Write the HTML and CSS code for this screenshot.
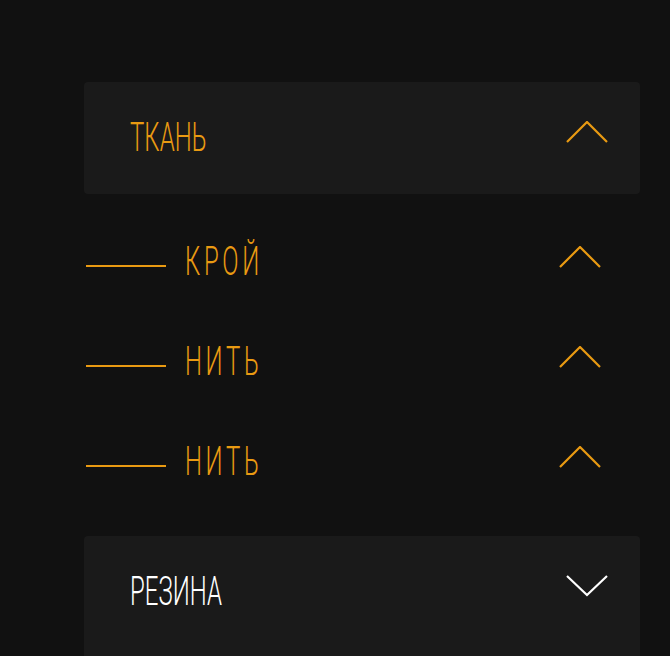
FILE: index.html
```html
<!DOCTYPE html>
<html lang="ru">
<head>
<meta charset="utf-8">
<link rel="stylesheet" href="styles.css">
</head>
<body>
<div class="wrap">
  <div class="card">
    <span class="title orange"><span class="scale">ТКАНЬ</span></span>
    <svg class="chev" width="42" height="22" viewBox="0 0 42 22"><polyline points="1,21 21,1 41,21" fill="none" stroke="#e99a12" stroke-width="2.2"/></svg>
  </div>
  <div class="list">
    <div class="row">
      <span class="dash"></span>
      <span class="sub"><span class="scale">КРОЙ</span></span>
      <svg class="chev sm" width="42" height="22" viewBox="0 0 42 22"><polyline points="1,21 21,1 41,21" fill="none" stroke="#e99a12" stroke-width="2.2"/></svg>
    </div>
    <div class="row">
      <span class="dash"></span>
      <span class="sub"><span class="scale">НИТЬ</span></span>
      <svg class="chev sm" width="42" height="22" viewBox="0 0 42 22"><polyline points="1,21 21,1 41,21" fill="none" stroke="#e99a12" stroke-width="2.2"/></svg>
    </div>
    <div class="row">
      <span class="dash"></span>
      <span class="sub"><span class="scale">НИТЬ</span></span>
      <svg class="chev sm" width="42" height="22" viewBox="0 0 42 22"><polyline points="1,21 21,1 41,21" fill="none" stroke="#e99a12" stroke-width="2.2"/></svg>
    </div>
  </div>
  <div class="card card2">
    <span class="title white"><span class="scale">РЕЗИНА</span></span>
    <svg class="chev down" width="42" height="22" viewBox="0 0 42 22"><polyline points="1,1 21,20 41,1" fill="none" stroke="#ffffff" stroke-width="2.2"/></svg>
  </div>
</div>
</body>
</html>
```

FILE: styles.css
```css
html, body {
  margin: 0;
  padding: 0;
  background: #111111;
  height: 100%;
  overflow: hidden;
}
body {
  font-family: Roboto, "Liberation Sans", sans-serif;
}
.wrap {
  width: 556px;
  margin-left: 84px;
  padding-top: 82px;
}
.card {
  height: 112px;
  background: #1a1a1a;
  border-radius: 4px;
  display: flex;
  align-items: center;
  padding: 0 32px 0 46px;
  box-sizing: border-box;
}
.card2 {
  margin-top: 24px;
  height: 140px;
  align-items: flex-start;
  padding-top: 36px;
  border-radius: 4px 4px 0 0;
}
.title {
  flex: 1;
  font-size: 40px;
  line-height: 40px;
  font-weight: 300;
  white-space: nowrap;
}
.scale {
  display: inline-block;
  transform: scaleX(0.6);
  transform-origin: left center;
}
.orange { color: #e99a12; }
.white { color: #ffffff; }
.chev {
  display: block;
  margin-top: -12px;
  flex: none;
}
.down {
  margin-top: 3px;
}
.list {
  padding-top: 18px;
}
.row {
  height: 100px;
  display: flex;
  align-items: center;
  padding-right: 39px;
}
.dash {
  width: 80px;
  height: 2px;
  margin-left: 2px;
  margin-top: 8px;
  background: #e99a12;
  flex: none;
}
.sub {
  flex: 1;
  margin-left: 19px;
  color: #e99a12;
  font-size: 40px;
  line-height: 40px;
  font-weight: 300;
  letter-spacing: 6px;
  white-space: nowrap;
}
.sm {
  margin-top: -10px;
}
```
